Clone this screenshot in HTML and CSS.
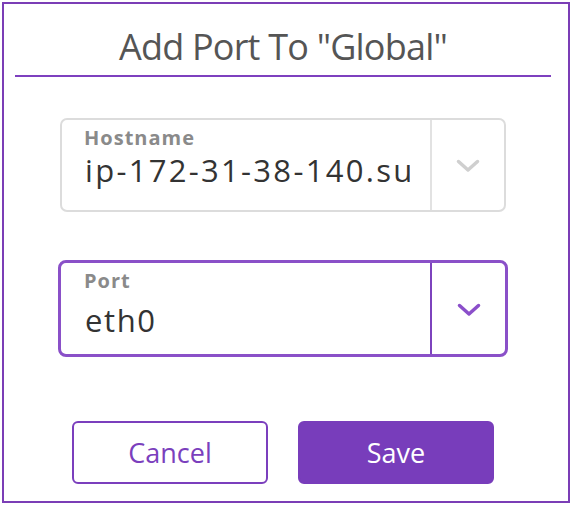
FILE: index.html
```html
<!DOCTYPE html>
<html>
<head>
<meta charset="utf-8">
<link rel="stylesheet" href="styles.css">
</head>
<body>
<div class="dialog">
  <div class="header">
    <h1 class="title">Add Port To "Global"</h1>
  </div>
  <div class="content">
    <div class="select">
      <div class="select-main">
        <div class="select-label">Hostname</div>
        <div class="select-value">ip-172-31-38-140.subnet.internal</div>
      </div>
      <div class="select-toggle">
        <svg class="chevron" width="24" height="14" viewBox="0 0 24 14"><polyline points="2.5,2.5 12,11 21.5,2.5" fill="none" stroke="currentColor" stroke-width="3.5" stroke-linecap="round" stroke-linejoin="round"/></svg>
      </div>
    </div>
    <div class="select select-focused">
      <div class="select-main">
        <div class="select-label">Port</div>
        <div class="select-value">eth0</div>
      </div>
      <div class="select-toggle">
        <svg class="chevron" width="24" height="14" viewBox="0 0 24 14"><polyline points="2.5,2.5 12,11 21.5,2.5" fill="none" stroke="currentColor" stroke-width="3.5" stroke-linecap="round" stroke-linejoin="round"/></svg>
      </div>
    </div>
    <div class="actions">
      <button class="btn btn-outline">Cancel</button>
      <button class="btn btn-primary">Save</button>
    </div>
  </div>
</div>
</body>
</html>
```
FILE: styles.css
```css
* { box-sizing: border-box; }
html, body { margin: 0; padding: 0; background: #fff; }
body { font-family: "Open Sans", "Noto Sans", sans-serif; }

.dialog {
  margin: 2px 0 0 2px;
  width: 568px;
  height: 501px;
  border: 2px solid #7b3eb6;
  display: flex;
  flex-direction: column;
}

.header {
  margin: 0 17px 0 11px;
  height: 73px;
  padding-top: 25px;
  border-bottom: 2px solid #7e40bf;
  display: flex;
  align-items: flex-start;
  justify-content: center;
}

.title {
  margin: 0;
  font-size: 36px;
  line-height: 36px;
  font-weight: 400;
  color: #555;
  letter-spacing: -0.8px;
}

.content {
  margin: 0 17px 0 11px;
  display: flex;
  flex-direction: column;
  align-items: center;
}

.select {
  margin-top: 41px;
  width: 446px;
  height: 94px;
  border: 2px solid #dcdcdc;
  border-radius: 7px;
  display: flex;
  background: #fff;
}

.select-focused {
  margin-top: 48px;
  width: 450px;
  height: 97px;
  border: 3px solid #8a50c8;
  border-radius: 8px;
}

.select-main {
  flex: 1;
  min-width: 0;
  padding: 5px 20px 0 22px;
  border-right: 2px solid #e2e2e2;
  overflow: hidden;
}

.select-focused .select-main {
  padding: 5px 20px 0 23px;
  border-right: 2px solid #7d43bd;
}

.select-label {
  font-size: 20px;
  font-weight: 700;
  color: #8a8a8a;
  line-height: 26px;
  letter-spacing: 1px;
}

.select-value {
  font-size: 31px;
  color: #333;
  line-height: 38px;
  letter-spacing: 2.3px;
  white-space: nowrap;
  overflow: hidden;
  padding-left: 1px;
}

.select-focused .select-value {
  padding-top: 5px;
  line-height: 42px;
  letter-spacing: 1.6px;
  overflow: visible;
}

.select-toggle {
  width: 72px;
  display: flex;
  align-items: center;
  justify-content: center;
  padding-top: 2px;
  color: #cfcfcf;
}

.select-focused .select-toggle {
  width: 73px;
  color: #8b4fca;
  padding-top: 3px;
}

.chevron { display: block; }

.actions {
  margin-top: 64px;
  display: flex;
  gap: 30px;
}

.btn {
  width: 196px;
  height: 63px;
  border-radius: 6px;
  font-family: "Open Sans", "Noto Sans", sans-serif;
  font-size: 27px;
  display: flex;
  align-items: center;
  justify-content: center;
  padding: 0;
  cursor: pointer;
}

.btn-outline {
  background: #fff;
  color: #7b3fbd;
  border: 2px solid #7b3fbd;
}

.btn-primary {
  background: #783dbb;
  color: #fff;
  border: 2px solid #783dbb;
}
```
